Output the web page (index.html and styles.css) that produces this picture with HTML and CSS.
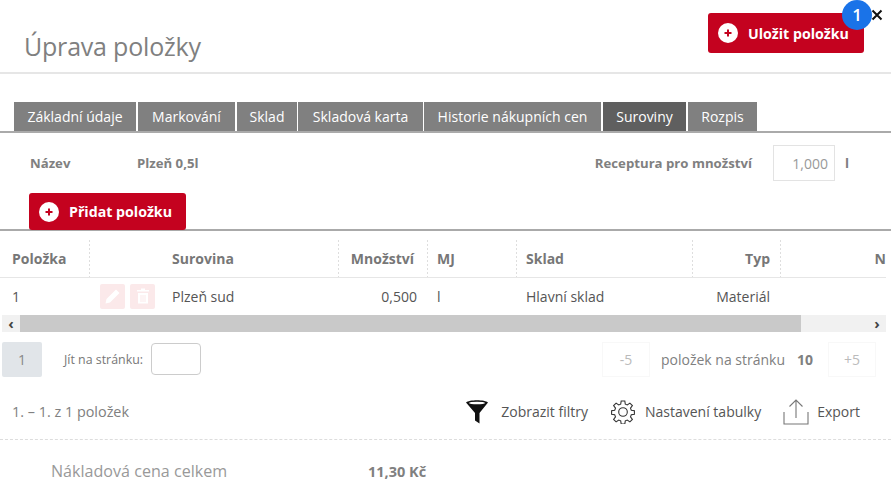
FILE: index.html
```html
<!DOCTYPE html>
<html lang="cs">
<head>
    <meta charset="UTF-8">
    <title>Úprava položky</title>
    <link rel="stylesheet" href="styles.css">
</head>
<body>
    <header class="top">
        <h1>Úprava položky</h1>
        <button class="btn btn-save" type="button">
            <svg class="plus" viewBox="0 0 20 20"><circle cx="10" cy="10" r="10" fill="#fff"/><path d="M10 6.5v7M6.5 10h7" stroke="#c4021f" stroke-width="2"/></svg>
            Uložit položku
        </button>
        <span class="badge">1</span>
        <svg class="close" viewBox="0 0 12 12"><path d="M1.5 1.5l9 9M10.500 1.500l-9 9" stroke="#111" stroke-width="2"/></svg>
    </header>

    <nav class="tabs">
        <a class="tab tab-1">Základní údaje</a>
        <a class="tab tab-2">Markování</a>
        <a class="tab tab-3">Sklad</a>
        <a class="tab tab-4">Skladová karta</a>
        <a class="tab tab-5">Historie nákupních cen</a>
        <a class="tab tab-6 active">Suroviny</a>
        <a class="tab tab-7">Rozpis</a>
    </nav>

    <section class="info">
        <span class="info-label">Název</span>
        <span class="info-value">Plzeň 0,5l</span>
        <span class="info-label recipe">Receptura pro množství</span>
        <input class="amount" type="text" value="1,000">
        <span class="info-label unit">l</span>
    </section>

    <div class="add-row">
        <button class="btn btn-add" type="button">
            <svg class="plus" viewBox="0 0 20 20"><circle cx="10" cy="10" r="10" fill="#fff"/><path d="M10 6.500v7M6.500 10h7" stroke="#c4021f" stroke-width="2"/></svg>
            Přidat položku
        </button>
    </div>

    <div class="table-wrap">
        <table class="grid">
            <colgroup>
                <col class="c1"><col class="c2"><col class="c3"><col class="c4"><col class="c5"><col class="c6"><col class="c7">
            </colgroup>
            <thead>
                <tr>
                    <th>Položka</th>
                    <th class="name-head">Surovina</th>
                    <th class="right amount-head">Množství</th>
                    <th>MJ</th>
                    <th>Sklad</th>
                    <th class="right">Typ</th>
                    <th class="right last">N</th>
                </tr>
            </thead>
            <tbody>
                <tr>
                    <td>1</td>
                    <td>
                        <div class="name-cell">
                            <span class="act">
                                <svg viewBox="0 0 16 16"><path d="M0.500 15.500l1-4.500L11 1.500l3.500 3.500L5 14.500z" fill="#fff"/></svg>
                            </span>
                            <span class="act">
                                <svg viewBox="0 0 16 16"><path d="M6 0.500h4v1.500h4v1.500H2V2h4zM3 5h10v10.500H3z" fill="#fff"/><path d="M6 7v7M8 7v7M10 7v7" stroke="#fbe9ea"/></svg>
                            </span>
                            <span>Plzeň sud</span>
                        </div>
                    </td>
                    <td class="right">0,500</td>
                    <td>l</td>
                    <td>Hlavní sklad</td>
                    <td class="right">Materiál</td>
                    <td></td>
                </tr>
            </tbody>
        </table>
        <div class="scrollbar">
            <span class="arrow">‹</span>
            <div class="track"><div class="thumb"></div></div>
            <span class="arrow">›</span>
        </div>
    </div>

    <div class="pager">
        <span class="page-now">1</span>
        <label class="goto">Jít na stránku:</label>
        <input class="goto-input" type="text">
        <span class="step step-minus">-5</span>
        <span class="per-page">položek na stránku</span>
        <b class="per-num">10</b>
        <span class="step">+5</span>
    </div>

    <div class="tools">
        <span class="count">1. – 1. z 1 položek</span>
        <a class="tool tool-filter">
            <svg width="22" height="24" viewBox="0 0 22 24"><path d="M0 2.500C3 -.5 19 -.5 22 2.500L13.500 13v10.500L9 20.500V13z" fill="#111"/><ellipse cx="11" cy="3" rx="8" ry="1.300" fill="#fff"/></svg>
            Zobrazit filtry
        </a>
        <a class="tool tool-gear">
            <svg width="24" height="24" viewBox="0 0 24 24" fill="none" stroke="#333" stroke-width="1.100"><circle cx="12" cy="12" r="4.300"/><path d="M10.200 1h3.600l.5 3.200 2 .8 2.600-1.900 2.500 2.500-1.900 2.600.8 2 3.100.5v3.600l-3.100.5-.8 2 1.900 2.600-2.500 2.500-2.600-1.900-2 .8-.5 3.200h-3.600l-.5-3.200-2-.8-2.600 1.900-2.500-2.500 1.900-2.600-.8-2-3.100-.5v-3.600l3.100-.5.8-2-1.900-2.600 2.500-2.500 2.600 1.900 2-.8z"/></svg>
            Nastavení tabulky
        </a>
        <a class="tool tool-export">
            <svg width="26" height="26" viewBox="0 0 26 26" fill="none" stroke="#777" stroke-width="1.100"><path d="M1 13v12h24V13"/><path d="M13 19V1M6.500 7.500L13 1l6.500 6.500"/></svg>
            Export
        </a>
    </div>

    <footer class="summary">
        <span class="sum-label">Nákladová cena celkem</span>
        <b class="sum-value">11,30 Kč</b>
    </footer>
</body>
</html>
```

FILE: styles.css
```css
* {
    box-sizing: border-box;
}
html, body {
    height: 486px;
    overflow: hidden;
}
body {
    margin: 0;
    background: #fff;
    color: #333;
    font-family: "Open Sans", "Noto Sans", sans-serif;
    font-size: 13px;
}
.top {
    position: relative;
    display: flex;
    justify-content: space-between;
    height: 74px;
    padding: 13px 27px 0 24px;
    border-bottom: 2px solid #e6e6e6;
}
.top h1 {
    margin: 16px 0 0;
    color: #808080;
    font-size: 25px;
    font-weight: 400;
    letter-spacing: -0.2px;
}
.btn {
    display: flex;
    align-items: center;
    gap: 10px;
    border: 0;
    border-radius: 3px;
    background: #c4021f;
    color: #fff;
    font-family: inherit;
    font-size: 14.200px;
    font-weight: 700;
    white-space: nowrap;
}
.btn-save {
    width: 156px;
    height: 40px;
    padding: 0 0 0 10px;
}
.btn-add {
    width: 157px;
    height: 37px;
    padding: 0 0 0 10px;
}
.plus {
    width: 20px;
    height: 20px;
}
.badge {
    position: absolute;
    left: 842px;
    top: 0;
    width: 30px;
    height: 30px;
    border-radius: 50%;
    background: #1a73e8;
    color: #fff;
    font-size: 17px;
    font-weight: 600;
    line-height: 29px;
    text-align: center;
}
.close {
    position: absolute;
    left: 871px;
    top: 9px;
    width: 12px;
    height: 12px;
}

.tabs {
    display: flex;
    height: 31px;
    margin-top: 28px;
    padding-left: 14px;
    border-bottom: 2px solid #aaa;
}
.tab {
    margin-right: 2px;
    background: #808080;
    color: #fff;
    font-size: 14px;
    line-height: 30px;
    text-align: center;
}
.tab-1 { width: 122px; }
.tab-2 { width: 97px; }
.tab-3 { width: 60px; margin-right: 1px; }
.tab-4 { width: 125px; margin-right: 1px; }
.tab-5 { width: 177px; }
.tab-6 { width: 83px; }
.tab-7 { width: 69px; }
.tab.active {
    background: #5f5f5f;
}

.info {
    display: flex;
    align-items: center;
    height: 36px;
    margin-top: 12px;
    padding-left: 30px;
}
.info-label, .info-value {
    color: #808080;
    font-size: 13.200px;
    font-weight: 700;
}
.info-label:first-child {
    width: 107px;
}
.recipe {
    margin-left: auto;
    margin-right: 21px;
}
.amount {
    width: 62px;
    height: 36px;
    padding: 0 6px 0 0;
    border: 1px solid #e3e3e3;
    color: #999;
    font-family: inherit;
    font-size: 14px;
    text-align: right;
}
.unit {
    margin-left: 10px;
    margin-right: 42px;
}

.add-row {
    height: 38px;
    margin-top: 12px;
    padding-left: 29px;
    border-bottom: 2px solid #aaa;
}

.table-wrap {
    padding-right: 5px;
}
.grid {
    width: 886px;
    table-layout: fixed;
    border-collapse: collapse;
}
.c1 { width: 90px; }
.c2 { width: 249px; }
.c3 { width: 89px; }
.c4 { width: 89px; }
.c5 { width: 176px; }
.c6 { width: 88px; }
.c7 { width: 105px; }
.grid th {
    height: 46px;
    padding: 9px 11px 0 9px;
    border-bottom: 1px solid #e6e6e6;
    background: repeating-linear-gradient(to bottom, #dedede 0 2px, transparent 2px 4px) right bottom / 1px 37px no-repeat;
    color: #777;
    font-size: 14px;
    text-align: left;
}
.grid th.last {
    padding-right: 0;
    background: none;
}
.grid th.name-head {
    padding-left: 82px;
}
.grid th.amount-head {
    padding-right: 14px;
}
.grid th.right, .grid td.right {
    text-align: right;
}
.grid td {
    height: 37px;
    padding: 1px 11px 0 12px;
    color: #555;
    font-size: 14px;
}
.grid td:nth-child(4), .grid td:nth-child(5) {
    padding-left: 9px;
}
.grid th:first-child {
    padding-left: 12px;
}
.name-cell {
    display: flex;
    align-items: center;
    gap: 5px;
    margin-left: -2px;
}
.act {
    display: flex;
    align-items: center;
    justify-content: center;
    width: 25px;
    height: 25px;
    border-radius: 2px;
    background: #fbe9ea;
}
.act svg {
    width: 16px;
    height: 16px;
}
.name-cell .act + span:last-child {
    margin-left: 12px;
}

.scrollbar {
    display: flex;
    align-items: center;
    height: 17px;
    margin: 1px 0 0 2px;
    background: #f1f1f1;
}
.arrow {
    width: 18px;
    color: #444;
    font-size: 15px;
    font-weight: 700;
    line-height: 15px;
    text-align: center;
}
.track {
    flex: 1;
    height: 17px;
}
.thumb {
    width: 781px;
    height: 17px;
    background: #c9c9c9;
}

.pager {
    display: flex;
    align-items: center;
    height: 36px;
    margin-top: 9px;
    padding-left: 2px;
}
.page-now {
    width: 40px;
    height: 35px;
    border-radius: 2px;
    background: #e1e5e9;
    color: #888;
    font-size: 14px;
    line-height: 35px;
    text-align: center;
}
.goto {
    margin-left: 22px;
    color: #777;
    font-size: 12.400px;
}
.goto-input {
    width: 50px;
    height: 32px;
    margin-left: 8px;
    border: 1px solid #ccc;
    border-radius: 4px;
}
.step {
    width: 48px;
    height: 35px;
    border: 1px solid #f8f8f8;
    color: #bbb;
    font-size: 14px;
    line-height: 33px;
    text-align: center;
}
.step-minus {
    margin-left: auto;
}
.per-page {
    margin-left: 11px;
    color: #808080;
    font-size: 14px;
}
.per-num {
    width: 43px;
    padding-left: 12px;
    color: #808080;
    font-size: 14px;
}
.pager .step:last-child {
    margin-right: 15px;
}

.tools {
    display: flex;
    align-items: center;
    height: 51px;
    margin-top: 12px;
    padding: 0 31px 5px 12px;
    border-bottom: 1px dashed #ddd;
}
.count {
    margin-right: auto;
    color: #808080;
    font-size: 14.400px;
}
.tool {
    display: flex;
    align-items: center;
    color: #555;
    font-size: 14px;
}
.tool-filter { gap: 13px; }
.tool-gear { gap: 10px; margin-left: 23px; }
.tool-export { gap: 8px; margin-left: 22px; }

.summary {
    display: flex;
    align-items: center;
    height: 30px;
    margin-top: 16px;
    padding-left: 51px;
}
.sum-label {
    width: 317px;
    color: #999;
    font-size: 16.100px;
}
.sum-value {
    color: #808080;
    font-size: 14.500px;
}
```
